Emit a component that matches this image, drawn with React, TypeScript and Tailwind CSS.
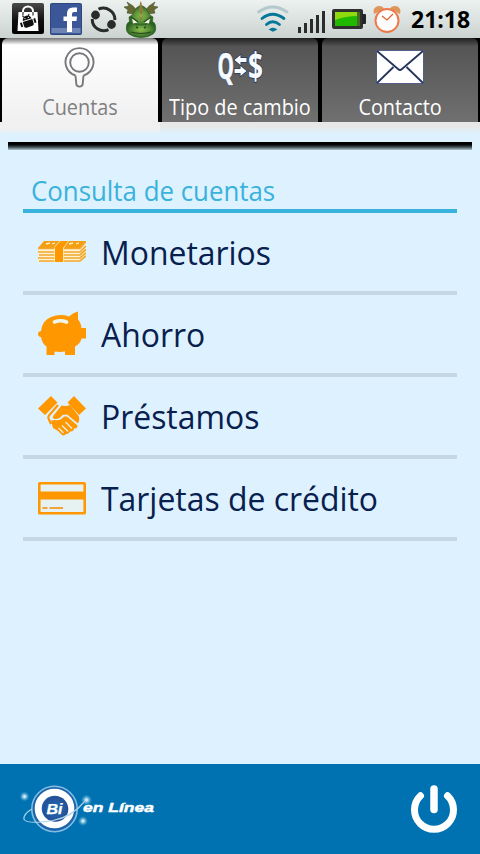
import type { ReactNode } from "react";

const MarketIcon = () => (
  <svg className="ml-3 mt-[3px] h-[31px] w-8 shrink-0" viewBox="0 0 32 31">
    <defs>
      <linearGradient id="mk" x1="0" y1="0" x2="0" y2="1">
        <stop offset="0" stopColor="#4a4a4a" />
        <stop offset=".55" stopColor="#111" />
        <stop offset="1" stopColor="#000" />
      </linearGradient>
    </defs>
    <rect width="32" height="31" rx="2" fill="url(#mk)" />
    <path d="M6.500 9h19l1 19h-21z" fill="#fff" />
    <path d="M11 12V8a5 4.500 0 0 1 10 0v4" fill="none" stroke="#fff" strokeWidth="2" />
    <path d="M11 12.500V9M21 12.500V9" stroke="#333" strokeWidth="1.200" />
    <g transform="rotate(-18 16 19)" fill="#111">
      <path d="M11.500 16.500a4.500 4 0 0 1 9 0zM11 17.500h10v4.500q0 2-2 2h-6q-2 0-2-2zM8 17.500h2v4.500H8zM22 17.500h2v4.500h-2z" />
      <path d="M12.500 11.500l1.200 2M19.500 11.500l-1.200 2" stroke="#111" />
      <circle cx="14.200" cy="14.800" r=".6" fill="#fff" />
      <circle cx="17.800" cy="14.800" r=".6" fill="#fff" />
    </g>
  </svg>
);

const FacebookIcon = () => (
  <svg className="ml-1.5 mt-[3px] h-8 w-8 shrink-0" viewBox="0 0 32 32">
    <rect x=".5" y=".5" width="31" height="31" rx="1" fill="#3b5798" stroke="#2f477f" />
    <path d="M1.500 25h29v5h-29z" fill="#6d84b4" />
    <path d="M17 29V18h-3.500v-4.500H17v-3Q17 4.500 23 4.500h4V9h-3q-2 0-2 2v2.500h5l-.5 4.500H22v11z" fill="#fff" />
  </svg>
);

const SyncIcon = () => (
  <svg className="ml-2 mt-1.5 h-[27px] w-7 shrink-0" viewBox="0 0 28 27" fill="none" stroke="#292c2b" strokeWidth="3">
    <path d="M8.500 3.200A11.500 11 0 0 1 24.800 14" />
    <path d="M2.300 13A11.500 11 0 0 0 18.500 23.600" />
    <circle cx="5.500" cy="9" r="2.900" fill="#292c2b" />
    <circle cx="21.500" cy="18.500" r="2.900" fill="#292c2b" />
  </svg>
);

const DragonIcon = () => (
  <svg className="ml-1.5 h-[38px] w-[34px] shrink-0" viewBox="0 0 34 38">
    <defs>
      <radialGradient id="dg">
        <stop offset="0" stopColor="#8fbe50" />
        <stop offset=".6" stopColor="#568f36" />
        <stop offset="1" stopColor="#2c6123" />
      </radialGradient>
    </defs>
    <path d="M10 14L3 13l1-3-4-3 5-1-2-4 6 4 5 6zM24 14l7-1-1-3 4-3-5-1 2-4-6 4-5 6z" fill="#656933" stroke="#4a5128" strokeWidth=".6" />
    <path d="M5 17q3-1 5-5 1-4 5-6h4q4 2 5 6 2 4 5 5l-1 9H6z" fill="url(#dg)" stroke="#305720" strokeWidth=".6" />
    <path d="M3 24q1-3 5-2 3 1 4 3h10q1-2 4-3 4-1 5 2 2 7-2 10-5 3.500-12 3.500T5 34q-4-3-2-10z" fill="url(#dg)" stroke="#2f6426" strokeWidth=".8" />
    <path d="M16 3l1-2 2 9-2 6-2-6zM14 14l3 4 3-4-3 7z" fill="#91793b" />
    <path d="M8 18l6 4.500-5 1zM26 18l-6 4.500 5 1z" fill="#f3f5e4" />
    <path d="M7 17l7 5M27 17l-7 5M7 32q10 3 20 0" fill="none" stroke="#294a20" strokeWidth="1.100" />
    <path d="M12 27l2 1M20 28l2-1" stroke="#234c1d" strokeWidth="1.400" />
  </svg>
);

const WifiIcon = () => (
  <svg className="mt-[5px] h-7 w-[34px] shrink-0" viewBox="0 0 34 28" fill="none" strokeLinecap="round">
    <path d="M2.500 7Q16.500-3 31 7" stroke="#b4c9cc" strokeWidth="2.800" />
    <path d="M6 13.500Q16.500 5 28 13.500" stroke="#067798" strokeWidth="2.800" />
    <path d="M10.500 19.500Q16.500 14 23.500 19.500" stroke="#067798" strokeWidth="2.800" />
    <path d="M14 24.500q3-2 6 0l-3 1.500z" fill="#067798" stroke="#067798" strokeWidth="1.500" />
  </svg>
);

const SignalIcon = () => (
  <svg className="ml-[8px] mt-[11px] h-[22px] w-[27px] shrink-0" viewBox="0 0 27 22">
    <path d="M0 16h3v6H0zM6 12h3v10H6zM12 8h3v14h-3zM18 4h3v18h-3zM24 0h3v22h-3z" fill="#2a2d2c" />
  </svg>
);

const BatteryIcon = () => (
  <svg className="ml-[7px] mt-[9px] h-5 w-[34px] shrink-0" viewBox="0 0 34 20">
    <rect width="31" height="20" rx="2" fill="#303030" />
    <path d="M30 5h3q1 0 1 1v8q0 1-1 1h-3z" fill="#252525" />
    <path d="M3 3h25v14H3z" fill="#466b24" />
    <path d="M3 3h22v14H3z" fill="#20b900" />
    <path d="M3 3h22v4q-11 0-22 4z" fill="#8fdb10" />
  </svg>
);

const AlarmIcon = () => (
  <svg className="ml-[7px] mt-[5px] h-7 w-[28px] shrink-0" viewBox="0 0 28 28">
    <path d="M1 9Q-1 2 6 1q4 0 5 3zM27 9q2-7-5-8-4 0-5 3z" fill="#df965d" />
    <circle cx="14" cy="15.500" r="11.500" fill="#fffdfb" stroke="#ed794b" strokeWidth="2" />
    <path d="M9 11l5 4 6-6" fill="none" stroke="#d66734" strokeWidth="1.300" />
  </svg>
);

const MagnifierIcon = () => (
  <svg className="h-[41px] w-8" viewBox="0 0 32 41" fill="none" stroke="#77787b" strokeWidth="1.900">
    <path d="M11.500 28.500A14 14 0 1 1 19.500 28.500" />
    <path d="M11.500 28.500l.8 8.500q.2 2.600 3.200 2.600t3.200-2.600l.8-8.500" />
    <circle cx="15.500" cy="15.500" r="9.300" />
  </svg>
);

const ExchangeIcon = () => (
  <svg className="h-[41px] w-12 overflow-visible" viewBox="0 0 48 41">
    <g fill="#f5faff" className="font-['Open_Sans',sans-serif] font-bold">
      <g stroke="#29395b" strokeWidth="1.800">
        <text x="1.500" y="31.500" fontSize="36" textLength="16.500" lengthAdjust="spacingAndGlyphs">Q</text>
        <text x="32" y="32.500" fontSize="38" textLength="15" lengthAdjust="spacingAndGlyphs">$</text>
        <path d="M18.500 13l6-5v3h6v4h-6v3zM30.500 24l-6-5v3h-6v4h6v3z" strokeWidth="1.500" />
      </g>
      <text x="1.500" y="31.500" fontSize="36" stroke="#f5faff" strokeWidth=".7" textLength="16.500" lengthAdjust="spacingAndGlyphs">Q</text>
      <text x="32" y="32.500" fontSize="38" textLength="15" lengthAdjust="spacingAndGlyphs">$</text>
      <path d="M18.500 13l6-5v3h6v4h-6v3zM30.500 24l-6-5v3h-6v4h6v3z" />
    </g>
  </svg>
);

const EnvelopeIcon = () => (
  <svg className="h-[41px] w-12" viewBox="0 0 48 41">
    <rect x=".5" y="3.500" width="47" height="33" fill="#fff" stroke="#526087" />
    <path d="M1 4l21 18q2 2 4 0L47 4M1 36l16.500-16M47 36L30.500 20" fill="none" stroke="#26345c" strokeWidth="1.800" />
  </svg>
);

const MoneyIcon = () => (
  <svg className="h-12 w-12" viewBox="0 0 48 48">
    <path d="M6 13h42l-6 7H0z" fill="#f59e12" />
    <path d="M0 21h42l6-7v15l-6 5H0z" fill="#fff3d3" />
    <path d="M0 20.500h42l6-7M0 24h42l6-6M1 27h41l6-5.500M0 30h42l6-5M1 33h41l6-5" fill="none" stroke="#f2a62e" strokeWidth="1.700" />
    <path d="M8 16l4-1M14 16l3-1M31 16l4-1M38 16l3-1" stroke="#fff0cd" strokeWidth="1.300" />
    <path d="M17 20l7-7h6l-5 7v14h-8z" fill="#ff9800" />
    <path d="M16 19.500l6-6.500M16.500 20v14M25.500 34V20l5-7" fill="none" stroke="#ffecc3" strokeWidth=".8" />
  </svg>
);

const PiggyIcon = () => (
  <svg className="h-12 w-12" viewBox="0 0 48 48">
    <path d="M0 24q0-2.500 3-3Q4 10.500 13 7q9-3.500 18-.5 4-4 9-5v8q3 3 3.500 8.500H48V28.500h-4.500q-1 5-6.500 8V45H27v-3.500q-5 .8-10.500 0V45H8.500v-8.500Q4 33.500 3 27q-3-.5-3-3z" fill="#ff9800" />
    <path d="M16.500 12q6-2.500 12 0" fill="none" stroke="#eff6ea" strokeWidth="3.600" strokeLinecap="round" />
  </svg>
);

const HandshakeIcon = () => (
  <svg className="h-12 w-12" viewBox="0 0 48 48">
    <path d="M0 16.500L13 4l6.500 6.500L7 23zM29.500 10.500L36 4l12 12.500-7 6.500z" fill="#ff9800" />
    <path d="M23.500 13.500q4.500 1 8.500-.5l9 11.500q1 4-1 7L29 22.500l-4.500.5q-4 5.500-9 3.500-1.500-1 0-3z" fill="#ff9800" />
    <path d="M20 13l-9 10.500q-1 1-.5 3l2.500 5.500" fill="none" stroke="#ff9800" strokeWidth="2.200" />
    <path d="M13 28.500l4.500-.5q5 1 8.500-3.500h3l10.500 9q0 3.500-3.500 3-.5 3.500-4 3-1.500 3-4 2.500-2 2.500-4.500.5l-3.500-3.500-5-3z" fill="#ff9800" />
    <path d="M27.500 30l6.500 6.500M24 33.500l6 6M20.500 36l5 5" fill="none" stroke="#e6f2ee" strokeWidth="1.200" />
  </svg>
);

const CardIcon = () => (
  <svg className="h-12 w-12" viewBox="0 0 48 48">
    <rect x="1.300" y="9.300" width="45.400" height="29.900" rx=".3" fill="#e6f2f2" stroke="#ff9800" strokeWidth="2.600" />
    <path d="M2 17.500h44V25.500H2z" fill="#ff9800" />
    <path d="M4.500 34h5M11.500 34H25" stroke="#f2a33b" strokeWidth="2.200" />
  </svg>
);

const BrandLogo = () => (
  <svg className="h-[52px] w-[148px]" viewBox="0 0 148 52">
    <defs>
      <radialGradient id="bi">
        <stop offset="0" stopColor="#1b72b8" />
        <stop offset="1" stopColor="#284d95" />
      </radialGradient>
      <radialGradient id="star">
        <stop offset="0" stopColor="#fff" />
        <stop offset=".3" stopColor="#9ed1e8" />
        <stop offset="1" stopColor="#4aa3d0" stopOpacity="0" />
      </radialGradient>
    </defs>
    <circle cx="38.500" cy="26" r="22.700" fill="#1d64ab" stroke="#82bee4" strokeWidth="1.600" />
    <circle cx="38.500" cy="25.500" r="16.300" fill="none" stroke="#fff" strokeWidth="7" />
    <circle cx="39.500" cy="26" r="12.800" fill="url(#bi)" />
    <path d="M16 26Q7 31 8 36.500q4 5 29 1Q56 34 69 18" fill="none" stroke="#a9d4eb" strokeWidth="1.200" />
    <circle cx="8.500" cy="13.500" r="5" fill="url(#star)" />
    <circle cx="70.500" cy="17" r="5.500" fill="url(#star)" />
    <circle cx="67" cy="38" r="5" fill="url(#star)" />
    <g fill="#fff" stroke="#fff" className="font-['Liberation_Sans',sans-serif] font-bold italic">
      <text x="30.500" y="31" fontSize="14" strokeWidth=".25" textLength="16" lengthAdjust="spacingAndGlyphs">Bi</text>
      <text x="67" y="28.700" fontSize="12" strokeWidth=".4" textLength="71" lengthAdjust="spacingAndGlyphs">en Línea</text>
    </g>
  </svg>
);

const PowerIcon = () => (
  <svg className="h-12 w-12" viewBox="0 0 48 48" fill="none" stroke="#fff" strokeLinecap="round">
    <path d="M24 4v20.500" strokeWidth="7.500" />
    <path d="M10.500 10.800a19.500 19.500 0 1 0 27 0" strokeWidth="7" />
  </svg>
);

function Tab({ label, active, children }: { label: string; active?: boolean; children: ReactNode }) {
  return (
    <button
      className={
        active
          ? "flex h-[85px] w-[156px] flex-col items-center rounded-t-md bg-linear-to-b from-[#777] via-white via-8% to-[#f0f0f0] pt-[9px] text-[#808080]"
          : "flex h-[84px] w-[156px] flex-col items-center rounded-t-md bg-linear-to-b from-[#222] via-[#555] via-10% to-[#707070] pt-[9px] text-white"
      }
    >
      {children}
      <span className="mt-[5px] scale-x-[0.945] whitespace-nowrap text-[21px] leading-7">{label}</span>
    </button>
  );
}

const accounts = [
  { label: "Monetarios", icon: <MoneyIcon /> },
  { label: "Ahorro", icon: <PiggyIcon /> },
  { label: "Préstamos", icon: <HandshakeIcon /> },
  { label: "Tarjetas de crédito", icon: <CardIcon /> },
];

export default function App() {
  return (
    <div className="flex h-[854px] w-[480px] flex-col overflow-hidden bg-[#def1ff] font-['Open_Sans','Noto_Sans',sans-serif]">
      <header className="flex h-[38px] shrink-0 items-start bg-linear-to-b from-[#edf2f1] to-[#cbd3d0]">
        <MarketIcon />
        <FacebookIcon />
        <SyncIcon />
        <DragonIcon />
        <div className="ml-auto flex items-start pr-[9px]">
          <WifiIcon />
          <SignalIcon />
          <BatteryIcon />
          <AlarmIcon />
          <span className="ml-[10px] mt-[3px] w-[60px] whitespace-nowrap text-[23px] font-bold leading-8 text-black">21:18</span>
        </div>
      </header>

      <nav className="h-24 shrink-0 bg-linear-to-b from-[#e7e7e7] from-92% to-[#def1ff]">
        <div className="flex h-[84px] items-start gap-1 bg-black pl-0.5">
          <Tab label="Cuentas" active><MagnifierIcon /></Tab>
          <Tab label="Tipo de cambio"><ExchangeIcon /></Tab>
          <Tab label="Contacto"><EnvelopeIcon /></Tab>
        </div>
        <div className="h-3 w-40 bg-linear-to-b from-[#f0f0f0] from-60% to-[#def1ff]" />
      </nav>

      <main className="flex-1 pt-2">
        <div className="mx-2 h-2 bg-linear-to-b from-black from-20% via-[#39464d] via-60% to-[#b4c6d1]" />
        <section className="mx-[23px] mt-[23px]">
          <h1 className="h-10 border-b-4 border-[#39b2dc] pl-2 text-[27px] leading-9 text-[#39b2dc]">
            <span className="inline-block origin-left scale-x-[0.957] whitespace-nowrap">Consulta de cuentas</span>
          </h1>
          <ul>
            {accounts.map(({ label, icon }) => (
              <li key={label} className="flex h-[82px] items-center border-b-4 border-[#c5d7e5] pl-[15px]">
                {icon}
                <span className="ml-[15px] origin-left scale-x-[0.967] whitespace-nowrap pt-0.5 text-[33px] leading-10 text-[#07204d]">{label}</span>
              </li>
            ))}
          </ul>
        </section>
      </main>

      <footer className="flex h-[90px] shrink-0 items-center justify-between bg-[#0072b1] pl-4 pr-[22px]">
        <BrandLogo />
        <PowerIcon />
      </footer>
    </div>
  );
}
